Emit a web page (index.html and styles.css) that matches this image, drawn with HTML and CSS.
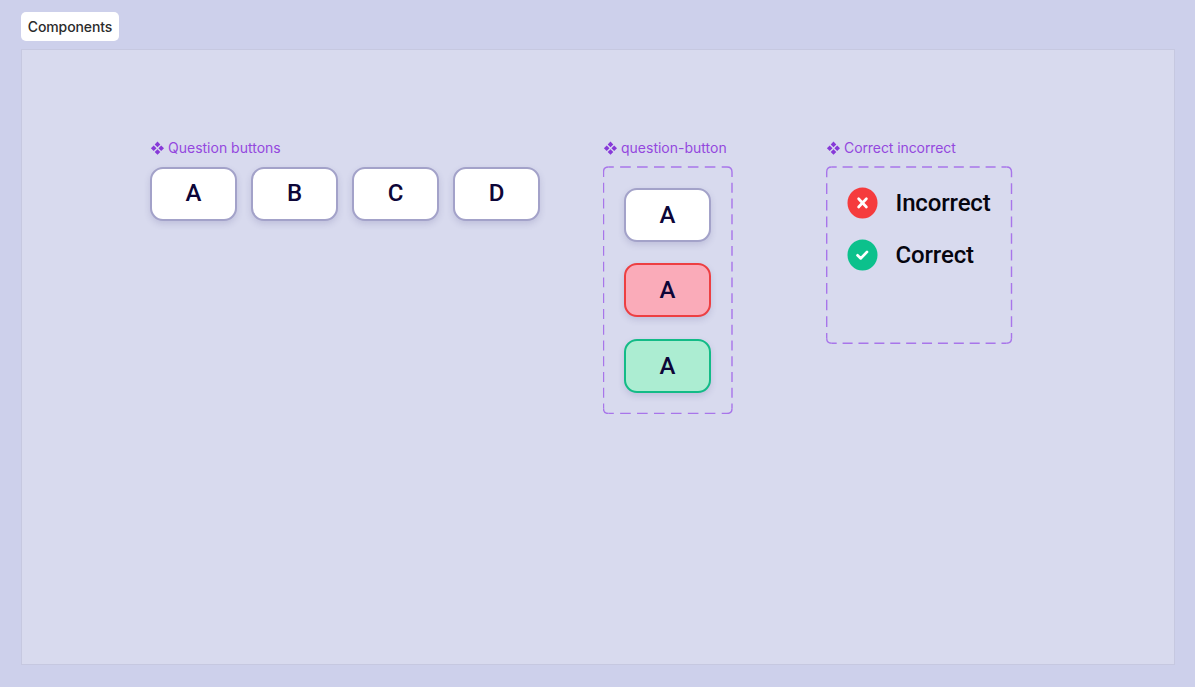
FILE: index.html
```html
<!DOCTYPE html>
<html lang="en">
<head>
<meta charset="utf-8">
<title>Components</title>
<link rel="stylesheet" href="styles.css">
</head>
<body>
<svg width="0" height="0" class="defs">
  <symbol id="component" viewBox="0 0 14 14">
    <path d="M7.500.6 10.300 3.400 7.500 6.200 4.700 3.400ZM7.500 8.200 10.300 11 7.500 13.800 4.700 11ZM3.700 4.400 6.500 7.200 3.700 10 .9 7.200ZM11.200 4.400 14 7.200 11.200 10 8.400 7.200Z"/>
  </symbol>
</svg>
<h1 class="section-name">Components</h1>
<main class="canvas">
  <section>
    <h2 class="label"><svg><use href="#component"/></svg><span>Question buttons</span></h2>
    <div class="row">
      <div class="button">A</div><div class="button">B</div><div class="button">C</div><div class="button">D</div>
    </div>
  </section>
  <section class="states">
    <h2 class="label"><svg><use href="#component"/></svg><span>question-button</span></h2>
    <div class="frame frame-buttons">
      <svg class="outline" width="130" height="248">
        <path d="M.5 6Q.5 1 5.500 1M124 1Q129 1 129 6M129 242.500Q129 247.500 124 247.500M5.500 247.500Q.5 247.500.5 242.500"/>
        <path class="dash-h" d="M5.500 1H124M5.500 247.500H124"/>
        <path class="dash-v" d="M.5 6V242.500M129 6V242.500"/>
      </svg>
      <div class="button">A</div><div class="button wrong">A</div><div class="button right">A</div>
    </div>
  </section>
  <section class="results">
    <h2 class="label"><svg><use href="#component"/></svg><span class="narrow">Correct incorrect</span></h2>
    <div class="frame frame-results">
      <svg class="outline" width="187" height="178">
        <path d="M.7 6Q.7 1 5.700 1M180.500 1Q185.500 1 185.500 6M185.500 172.300Q185.500 177.300 180.500 177.300M5.700 177.300Q.7 177.300.7 172.300"/>
        <path class="dash-h" d="M5.700 1H180.500M5.700 177.300H180.500"/>
        <path class="dash-v" d="M.7 6V172.300M185.500 6V172.300"/>
      </svg>
      <div class="result"><svg width="31" height="32" viewBox="0 -.5 31 32"><ellipse cx="15.500" cy="15.500" rx="15" ry="15.400" fill="#f53b3d"/><path d="M11.600 11.300 19.400 19.500M19.400 11.300 11.600 19.500"/></svg><span>Incorrect</span></div>
      <div class="result"><svg width="31" height="32" viewBox="0 -.5 31 32"><ellipse cx="15.500" cy="15.500" rx="15" ry="15.400" fill="#0cc18c"/><path d="M10.500 15.800 13.800 18.900 20 12.400"/></svg><span>Correct</span></div>
    </div>
  </section>
</main>
</body>
</html>
```
FILE: styles.css
```css
* { box-sizing: border-box; }
body {
  margin: 0;
  height: 687px;
  padding: 12px 20px 22px 21px;
  background: #cdd0eb;
  font-family: Inter, sans-serif;
  display: flex;
  flex-direction: column;
  align-items: flex-start;
  overflow: hidden;
}
.defs { position: absolute; }
.section-name {
  margin: 0 0 8px;
  width: 98px;
  height: 29px;
  flex: none;
  border-radius: 5px;
  background: #fff;
  color: #2b2b2b;
  font-size: 14px;
  font-weight: 500;
  line-height: 29px;
  letter-spacing: -0.100px;
  text-align: center;
  white-space: nowrap;
}
.canvas {
  width: 1154px;
  height: 616px;
  flex: none;
  border: 1px solid #c6c8e0;
  background: #d8daee;
  padding: 88px 0 0 128px;
  display: flex;
  align-items: flex-start;
}
.states { margin-left: 63px; }
.results { margin-left: 93px; }
.label {
  margin: 0 0 8px;
  height: 20px;
  display: flex;
  align-items: center;
  gap: 4px;
  color: #9448de;
  font-size: 14px;
  font-weight: 400;
  line-height: 20px;
  white-space: nowrap;
}
.label svg { width: 14px; height: 14px; fill: #8739d8; }
.label .narrow { letter-spacing: -0.080px; }
.row { display: flex; gap: 14px; margin-top: 9px; }
.button {
  width: 87px;
  height: 54px;
  border: 2px solid #a3a2c9;
  border-radius: 13px;
  background: #fff;
  box-shadow: 0 3px 6px rgba(70, 65, 130, 0.170);
  color: #0d0638;
  font: 500 24px/49px Roboto, sans-serif;
  text-align: center;
}
.wrong { background: #faabb9; border-color: #ed3f42; }
.right { background: #acedd2; border-color: #13bb87; }
.frame { position: relative; display: flex; flex-direction: column; }
.frame-buttons { width: 130px; height: 248px; padding: 22px 21px; gap: 21.400px; }
.frame-buttons .button { line-height: 51px; }
.frame-results { width: 187px; height: 178px; padding: 21px; gap: 20px; }
.outline { position: absolute; left: 0; top: 0; fill: none; stroke: #a875ea; stroke-width: 1.400; }
.frame-buttons .dash-h { stroke-dasharray: 10.600 6.330; stroke-dashoffset: 5.300; }
.frame-buttons .dash-v { stroke-dasharray: 9.900 5.870; stroke-dashoffset: 4.950; }
.frame-results .dash-h { stroke-dasharray: 10 5.890; stroke-dashoffset: 5; }
.frame-results .dash-v { stroke-dasharray: 10.600 6.030; stroke-dashoffset: 5.300; }
.result { display: flex; align-items: center; height: 32px; gap: 17.500px; color: #06050e; font: 500 24px/30px Roboto, sans-serif; letter-spacing: -0.150px; }
.result svg { flex: none; }
.result path { fill: none; stroke: #fff; stroke-width: 2.700; stroke-linecap: round; stroke-linejoin: round; }
```
